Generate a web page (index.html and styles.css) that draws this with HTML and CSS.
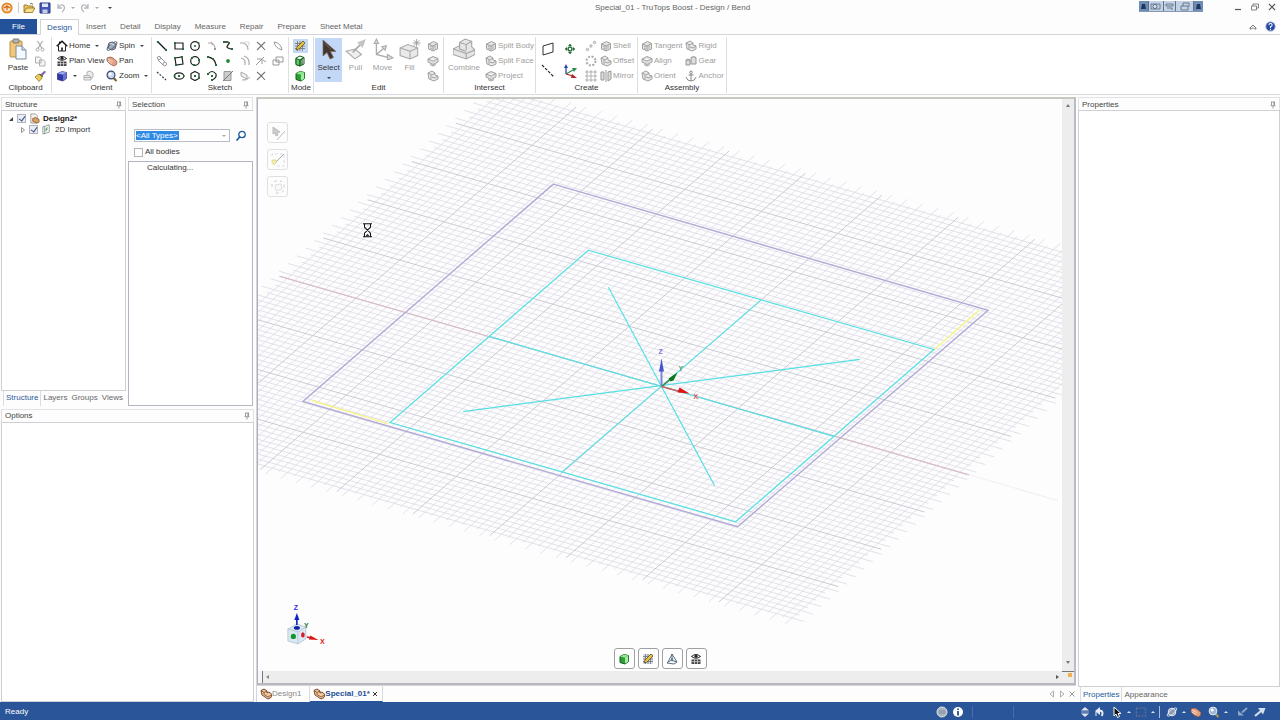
FILE: index.html
```html
<!DOCTYPE html>
<html lang="en">
<head>
<meta charset="utf-8">
<title>Special_01 - TruTops Boost - Design / Bend</title>
<link rel="stylesheet" href="styles.css">
</head>
<body>
<svg class="defs" aria-hidden="true">
  <symbol id="i-app" viewBox="0 0 12 12"><circle cx="6" cy="6" r="5.6" fill="#e8892c"/><circle cx="6" cy="6" r="3.6" fill="#fbe3c4"/><path d="M3 6l3-2 3 2M6 4v4" fill="none" stroke="#c8661a" stroke-width="1.2"/></symbol>
  <symbol id="i-open" viewBox="0 0 12 12"><path d="M1 10V3h3l1 1h5v2" fill="#f0c860" stroke="#8a6a20" stroke-width=".8"/><path d="M1 10.500 3.500 6H12l-2.500 4.500z" fill="#fbe08a" stroke="#8a6a20" stroke-width=".8"/><path d="M7 2q2-1.500 3 .5" fill="none" stroke="#444" stroke-width=".8"/></symbol>
  <symbol id="i-save" viewBox="0 0 12 12"><path d="M1 1h10v10H1z" fill="#4558b8" stroke="#2a3680"/><path d="M3 1.500h6V5H3z" fill="#dfe8fa"/><path d="M3.500 7.500h5V11h-5z" fill="#c6cfe8"/></symbol>
  <symbol id="i-undo" viewBox="0 0 12 12"><path d="M3 2v4h4M3 6q3-5 6-2 1.500 3-2 6" fill="none" stroke="#b4b8be" stroke-width="1.300"/></symbol>
  <symbol id="i-paste" viewBox="0 0 18 22"><rect x="1" y="3" width="12" height="16" rx="1" fill="#f0c878" stroke="#b8904a"/><rect x="4" y="1" width="6" height="4" rx="1" fill="#b5b5b0" stroke="#777"/><path d="M7 8h6l4 4v9H7z" fill="#f4f8ff" stroke="#7a8aa4"/><path d="M13 8v4h4" fill="#d4dced" stroke="#7a8aa4"/></symbol>
  <symbol id="i-cut" viewBox="0 0 12 12"><path d="M3.500 1 8 8.500M8.500 1 4 8.500" stroke="#aaa" stroke-width="1.200"/><circle cx="3.500" cy="9.500" r="1.500" fill="none" stroke="#aaa"/><circle cx="8.500" cy="9.500" r="1.500" fill="none" stroke="#aaa"/></symbol>
  <symbol id="i-copy" viewBox="0 0 12 12"><path d="M1.500 2h4l1.500 1.500V8H1.500zM5.500 5h4L11 6.500V11H5.500z" fill="#f5f5f5" stroke="#b0b0b0"/></symbol>
  <symbol id="i-brush" viewBox="0 0 12 12"><path d="M7 4.500 10.500 1l1 1L8 6z" fill="#8a5ab8" stroke="#55407a" stroke-width=".5"/><path d="M1 7q3-3 5-3l2.500 2.500Q8 9 5 11.500z" fill="#e8cf50" stroke="#80702a" stroke-width=".7"/><path d="m5.500 4 3 3" stroke="#333"/></symbol>
  <symbol id="i-home" viewBox="0 0 12 12"><path d="M2.500 5.500V11h7V5.500" fill="#fff" stroke="#222"/><path d="M.7 6.300 6 1.300l5.300 5" fill="none" stroke="#111" stroke-width="1.400"/><path d="M3 1.500h1.500V3L3 4z" fill="#111"/><path d="M5 11V7.500h2V11" fill="#444"/></symbol>
  <symbol id="i-plan" viewBox="0 0 12 12"><path d="M1.500 3.500Q6-.5 10.500 3.500 6 7 1.500 3.500z" fill="#eee" stroke="#222"/><circle cx="6" cy="3.300" r="1.500" fill="#222"/><path d="M1.500 6.500h9V11h-9z" fill="#444"/><path d="M4.500 6.500V11M7.500 6.500V11M1.500 8.700h9" stroke="#fff" stroke-width=".6"/></symbol>
  <symbol id="i-cube" viewBox="0 0 12 12"><path d="m1.500 3.500 4.500-2 4.500 1v6L7 11l-5.500-1.500z" fill="#3038a8" stroke="#141a60" stroke-width=".6"/><path d="m1.500 3.500 4.500-2 4.500 1L7 4.700z" fill="#98a4ec"/><path d="M7 4.700 10.500 2.500v6L7 11z" fill="#6a72d0"/></symbol>
  <symbol id="i-ghost" viewBox="0 0 12 12"><path d="M1 5.500h5l2 1.500v3H1zM4 5V2l3-1 3 2v4L8 8.500M1 7.500h7" fill="#ececec" stroke="#aaa" stroke-width=".9"/></symbol>
  <symbol id="i-spin" viewBox="0 0 12 12"><circle cx="6" cy="6" r="4" fill="#a3adbf" stroke="#5c6578"/><ellipse cx="6" cy="6" rx="6" ry="2.200" transform="rotate(-40 6 6)" fill="none" stroke="#5a6478" stroke-width="1"/><path d="M4 4Q6 3 7.500 4.500" stroke="#eef1f6" fill="none"/></symbol>
  <symbol id="i-pan" viewBox="0 0 12 12"><path d="M1 3q3-2 6 0l4 3.500-.5 3L8 11 4 9 1 6z" fill="#e0a084" stroke="#8e4e3a" stroke-width=".7"/><path d="m2 4 5 2.500M1.700 6 6 8.500" stroke="#fbd9c8" stroke-width=".9"/></symbol>
  <symbol id="i-zoom" viewBox="0 0 12 12"><path d="m7.500 8 3 3" stroke="#6c641f" stroke-width="2"/><circle cx="5" cy="5" r="3.900" fill="#c9d9ef" stroke="#3f4a74" stroke-width="1.200"/><circle cx="4.200" cy="4" r="1.500" fill="#fff"/></symbol>

  <symbol id="s-line" viewBox="0 0 12 12"><path d="m2 2 8 8" stroke="#111" stroke-width="1.300"/><path d="M.9.900h2v2h-2zM9 9h2v2H9z" fill="#276b3a"/></symbol>
  <symbol id="s-rect" viewBox="0 0 12 12"><path d="M2 3h8v6H2z" fill="none" stroke="#222" stroke-width="1.200"/><path d="M1 2h2v2H1zM9 8h2v2H9z" fill="#276b3a"/></symbol>
  <symbol id="s-circ" viewBox="0 0 12 12"><circle cx="6" cy="6" r="4.300" fill="none" stroke="#222" stroke-width="1.200"/><circle cx="6" cy="6" r="1.100" fill="#276b3a"/><circle cx="9.500" cy="3" r="1" fill="#276b3a"/></symbol>
  <symbol id="s-garc" viewBox="0 0 12 12"><path d="M2 3h3q4 1 4 6M5 2q2 2 1 3" fill="none" stroke="#aaa" stroke-width="1.100"/><path d="M8 8h2v2H8z" fill="#999"/></symbol>
  <symbol id="s-poly" viewBox="0 0 12 12"><path d="M2 2h4q2 1 0 3t0 3q2 1 4 1" fill="none" stroke="#222" stroke-width="1.300"/><path d="M1 1h2v2H1zM6 2h2v2H6zM9 8h2v2H9z" fill="#276b3a"/></symbol>
  <symbol id="s-fil" viewBox="0 0 12 12"><path d="M1 3h3q5 1 5 7" fill="none" stroke="#aaa" stroke-width="1.200"/><path d="M5 2h5v4" fill="none" stroke="#ccc" stroke-width=".8"/></symbol>
  <symbol id="s-trim" viewBox="0 0 12 12"><path d="M2 2q4 3 8 8M10 2 2 10" fill="none" stroke="#777" stroke-width="1.100"/></symbol>
  <symbol id="s-bend" viewBox="0 0 12 12"><path d="M2 2q1 6 8 8-1-7-8-8z" fill="none" stroke="#999"/></symbol>
  <symbol id="s-tan" viewBox="0 0 12 12"><circle cx="3" cy="3" r="1.600" fill="none" stroke="#999"/><path d="m4 2 6 6M2 5l5 5" stroke="#999"/><circle cx="8.800" cy="9" r="1.800" fill="none" stroke="#999"/></symbol>
  <symbol id="s-rect3" viewBox="0 0 12 12"><path d="m2 3 7-1 1 7-7 1z" fill="none" stroke="#222" stroke-width="1.200"/><path d="M1 2h2v2H1zM8 1h2v2H8zM2 9h2v2H2z" fill="#276b3a"/></symbol>
  <symbol id="s-circ3" viewBox="0 0 12 12"><circle cx="6" cy="6" r="4.300" fill="none" stroke="#222" stroke-width="1.200"/><path d="M2 2h2v2H2zM9 4h2v2H9zM4 9h2v2H4z" fill="#276b3a"/></symbol>
  <symbol id="s-arc" viewBox="0 0 12 12"><path d="M2 2q7 1 8 8" fill="none" stroke="#222" stroke-width="1.300"/><path d="M1 1h2v2H1zM6 3h2v2H6zM9 9h2v2H9z" fill="#276b3a"/></symbol>
  <symbol id="s-pt" viewBox="0 0 12 12"><circle cx="6" cy="6" r="1.900" fill="#238a32"/></symbol>
  <symbol id="s-off" viewBox="0 0 12 12"><path d="M2 3q5 1 4 7M5 1q6 2 5 9" fill="none" stroke="#aaa" stroke-width="1.200"/></symbol>
  <symbol id="s-split" viewBox="0 0 12 12"><path d="m1 10 8-8M2 4h5v5M8 5l3 2" fill="none" stroke="#999"/></symbol>
  <symbol id="s-scale" viewBox="0 0 12 12"><path d="M1 5h6v5H1zM4 2h7v5H4z" fill="none" stroke="#999"/></symbol>
  <symbol id="s-dash" viewBox="0 0 12 12"><path d="m1 2 9 8" stroke="#334" stroke-width="1.200" stroke-dasharray="2 1.500"/></symbol>
  <symbol id="s-ell" viewBox="0 0 12 12"><ellipse cx="6" cy="6" rx="4.800" ry="3.200" fill="none" stroke="#222" stroke-width="1.200"/><path d="M5 5h2v2H5zM1 5h1.500v2H1zM10 5h1.500v2H10z" fill="#276b3a"/></symbol>
  <symbol id="s-hex" viewBox="0 0 12 12"><path d="m6 1.500 4 2v5l-4 2-4-2v-5z" fill="none" stroke="#222" stroke-width="1.200"/><path d="M5 5h2v2H5zM9 7h2v2H9z" fill="#276b3a"/></symbol>
  <symbol id="s-sweep" viewBox="0 0 12 12"><path d="M2 4q4-5 8 0 1 4-4 6" fill="none" stroke="#222" stroke-width="1.200"/><path d="M1 3h2v2H1zM5 5h2v2H5zM5 9h2v2H5z" fill="#276b3a"/></symbol>
  <symbol id="s-face" viewBox="0 0 12 12"><path d="M2 1.500h7v9H2z" fill="#ccc" stroke="#999"/><path d="M1 11 11 1" stroke="#777"/></symbol>
  <symbol id="s-proj" viewBox="0 0 12 12"><path d="M2 2 8 5v4L2 6zM3 10q5 1 8-3" fill="#eee" stroke="#aaa"/></symbol>

  <symbol id="i-sketch" viewBox="0 0 12 12"><path d="M1 1h10v10H1z" fill="#d9dde6"/><path d="M1 3.500h10M1 6h10M1 8.500h10M3.500 1v10M6 1v10M8.500 1v10" stroke="#6b7184" stroke-width=".8"/><path d="m2 10 1-3 6-6 2 2-6 6z" fill="#e7c440" stroke="#54450e" stroke-width=".7"/></symbol>
  <symbol id="i-section" viewBox="0 0 12 12"><path d="m2 3 4-2 4 1.500V9l-4 2-4-1.500z" fill="#f2fff2" stroke="#185c1d"/><path d="M2 3.500 6 5v6L2 9.500z" fill="#5ccb60" stroke="#185c1d"/><path d="M6 5v6M6 5l4-2.500M8 4v6" stroke="#185c1d" stroke-width="1.200"/></symbol>
  <symbol id="i-solid" viewBox="0 0 12 12"><path d="m2 3.500 4-2 4.500 1v6L7 11 2 9.500z" fill="#2e9d38" stroke="#185c1d"/><path d="m2 3.500 4-2 4.500 1L7 4.700z" fill="#8fe890"/><path d="m7 4.700 3.200-2v6L7 10.500z" fill="#a5eda5"/></symbol>
  <symbol id="i-select" viewBox="0 0 20 22"><path d="M4 2v16l4-3.500 3 6.500 3.500-1.500-3-6h5.500z" fill="#44352e" stroke="#7d6c62" stroke-width=".7"/><path d="m5.500 5 7 7" stroke="#76665d"/></symbol>
  <symbol id="i-pull" viewBox="0 0 20 20"><path d="m1 12 8-2 6 5-6 4z" fill="#eee" stroke="#aaa"/><path d="m7 13 9-9" stroke="#aaa" stroke-width="1.600"/><path d="m11 4 8-3-3 8z" fill="#c4c4c4"/></symbol>
  <symbol id="i-move" viewBox="0 0 20 20"><path d="M4 3v12l12 3M4 15l7-6" fill="none" stroke="#aaa" stroke-width="1.200"/><path d="m2 5 2-4 2 4zM9 8l4-1-1 4zM14 15l5 3-5 2z" fill="#ddd" stroke="#aaa"/></symbol>
  <symbol id="i-fill" viewBox="0 0 20 20"><path d="m1 9 7-3 9 3v7l-7 3-9-3zM1 9l9 3v7M10 12l7-3" fill="#e9e9e9" stroke="#aaa"/><path d="M16 1v7M12.500 4.500h7M13.500 2l5 5M18.500 2l-5 5" stroke="#999" stroke-width=".8"/></symbol>
  <symbol id="i-box" viewBox="0 0 12 12"><path d="m1.500 4 5-2.500 4 2V9l-4.500 2-4.500-2zM1.500 4 6 6v5M6 6l4.500-2.500" fill="#e4e4e4" stroke="#a0a0a0"/><path d="M8 5v4M3 6l2 1M3 8l2 1" stroke="#aaa"/></symbol>
  <symbol id="i-layer" viewBox="0 0 12 12"><path d="m1 4 5-2.500 5 2L6 6zM1 4v3l5 2.500L11 7V3.500M3 9.500l3 1.500 3-1.500" fill="#e0e0e0" stroke="#a0a0a0"/></symbol>
  <symbol id="i-swirl" viewBox="0 0 12 12"><path d="m1 3 4-2 3 2v2l3 1v3l-4 2-5-2z" fill="#e9e9e9" stroke="#a0a0a0"/><path d="m1 3 4 2 3-2M4 5v4M5 7l3 1 3-2" fill="none" stroke="#a0a0a0"/></symbol>
  <symbol id="i-combine" viewBox="0 0 20 20"><path d="m6 4 5-3 6 2v5l3 3v4l-8 4-12-4v-5l6-3z" fill="#e6e6e6" stroke="#a4a4a4"/><path d="m6 4 6 2v5M12 6l5-3M0 10l12 4v5M12 14l8-3M6 7v3l6 2" fill="none" stroke="#a4a4a4"/></symbol>
  <symbol id="i-cylpair" viewBox="0 0 12 12"><path d="M1 5h4v5H1zM6 2.500h5V9H6z" fill="#ddd" stroke="#979797"/><path d="M1 5q2-2 4 0M6 2.500q2.500-2 5 0" fill="#f2f2f2" stroke="#979797"/></symbol>
  <symbol id="i-mirror" viewBox="0 0 12 12"><path d="M1 2h3v8H1zM8 2l3-1v8l-3 2zM6 0v12" fill="#ddd" stroke="#979797"/></symbol>
  <symbol id="i-anchor" viewBox="0 0 12 12"><circle cx="6" cy="2.300" r="1.300" fill="none" stroke="#888"/><path d="M6 4v7M3.500 5h5M1 7q1 4 5 4t5-4" fill="none" stroke="#888"/></symbol>
  <symbol id="i-plane" viewBox="0 0 14 14"><path d="m2 4 10-3v9L2 13z" fill="#fff" stroke="#333"/></symbol>
  <symbol id="i-axis" viewBox="0 0 14 14"><path d="m1 1 12 12" stroke="#222" stroke-width="1.100" stroke-dasharray="3 1.300"/></symbol>
  <symbol id="i-point" viewBox="0 0 14 14"><circle cx="7" cy="7" r="1.900" fill="none" stroke="#1f6a2c" stroke-width="1.200"/><path d="m7 2 1.500 2h-3zM7 12l1.500-2h-3zM2 7l2-1.500v3zM12 7l-2-1.500v3z" fill="#1f6a2c" stroke="#1f6a2c" stroke-width=".6"/></symbol>
  <symbol id="i-origin" viewBox="0 0 14 14"><path d="M3 10V2" stroke="#2848a8" stroke-width="1.300"/><path d="m1 4 2-4 2 4z" fill="#2848a8"/><path d="m3 10 7-4" stroke="#2a8a50" stroke-width="1.200"/><path d="m9 4 5 0-3 4z" fill="#2a8a50"/><path d="m3 10 7 2" stroke="#b32525" stroke-width="1.200"/><path d="m9 10 5 4H8z" fill="#b32525"/></symbol>
  <symbol id="i-pat1" viewBox="0 0 12 12"><g fill="#eee" stroke="#999" stroke-width=".8"><circle cx="2.500" cy="9.500" r="1.200"/><circle cx="6" cy="6" r="1.200"/><circle cx="9.500" cy="2.500" r="1.200"/></g></symbol>
  <symbol id="i-pat2" viewBox="0 0 12 12"><circle cx="6" cy="6" r="4.500" fill="none" stroke="#aaa" stroke-width="2" stroke-dasharray="2 1.530"/></symbol>
  <symbol id="i-pat3" viewBox="0 0 12 12"><path d="M1 1h2v2H1zM5 1h2v2H5zM9 1h2v2H9zM1 5h2v2H1zM5 5h2v2H5zM9 5h2v2H9zM1 9h2v2H1zM5 9h2v2H5zM9 9h2v2H9z" fill="#fff" stroke="#999" stroke-width=".7"/></symbol>

  <symbol id="i-pin" viewBox="0 0 8 8"><path d="M2 1h4M2.500 1v3.500M5.500 1v3.500M4.900 1v3.500M1.500 4.700h5M4 5v2.500" stroke="#888" stroke-width=".8"/></symbol>
  <symbol id="i-doc" viewBox="0 0 12 12"><path d="M2 1h5l2 2v8H2z" fill="#f6f2ea" stroke="#777" stroke-width=".7"/><path d="m4 6 3-1 4 2v3l-3 1-4-2z" fill="#d9a163" stroke="#70451c" stroke-width=".7"/></symbol>
  <symbol id="i-part" viewBox="0 0 12 12"><path d="M1 2.500 4 1l3 2v2l2-1 3 2.500-1 3-3 1.500-6-4z" fill="#f0c89c" stroke="#6b3a1b" stroke-width=".9"/><path d="m1 2.500 3 2v2l4 2.500 3.500-2M4 4.500l3-1.500" fill="none" stroke="#6b3a1b" stroke-width=".7"/></symbol>
  <symbol id="i-sheet" viewBox="0 0 12 12"><path d="m2 3 7-2v8l-7 2zM4 2.500v8" fill="#f4faf6" stroke="#7a8880" stroke-width=".8"/><path d="M5.500 8V5l2-1M5.500 6h1.500" fill="none" stroke="#3c7f56" stroke-width=".8"/></symbol>
  <symbol id="i-search" viewBox="0 0 12 12"><circle cx="7" cy="4.500" r="3.200" fill="none" stroke="#1d5a9a" stroke-width="1.300"/><path d="M4.700 7 1.500 10.500" stroke="#1d5a9a" stroke-width="1.800"/></symbol>
  <symbol id="i-triad" viewBox="0 0 12 12"><path d="m1 10 4-3 6 2-3 2zM6 8V1l5 8M6 1 2 9" fill="#edf4f8" stroke="#3d5260" stroke-width=".8"/><circle cx="6" cy="6" r="1" fill="#2c78b8"/></symbol>
  <symbol id="w-sel" viewBox="0 0 16 16"><path d="M3 2v7l2-1 1 3 2-1-1-2.500 3-.5z" fill="#ccc" stroke="#bbb"/><path d="M7 15l8-9" stroke="#bbb"/></symbol>
  <symbol id="w-line" viewBox="0 0 16 16"><path d="M2 4V2h12v12H5" fill="none" stroke="#ddd" stroke-dasharray="3 2"/><path d="m5 11 9-9" stroke="#aaa"/><path d="M2 8h4v3L4 13 2 11z" fill="#f5efb2" stroke="#ddd188" stroke-width=".7"/></symbol>
  <symbol id="w-rot" viewBox="0 0 16 16"><path d="m5 6 6-1 1 5-6 2z" fill="#fafafa" stroke="#ddd"/><path d="M2 8V5l3-3h6l3 3v6l-3 3H5" fill="none" stroke="#ccc" stroke-dasharray="3 3"/></symbol>
  <symbol id="t-orbit" viewBox="0 0 12 12"><circle cx="6" cy="6" r="3.800" fill="#8c9bb2" stroke="#e9eef5"/><ellipse cx="6" cy="6" rx="6" ry="2" transform="rotate(-40 6 6)" fill="none" stroke="#e4eaf2" stroke-width=".8"/></symbol>
  <symbol id="t-undo" viewBox="0 0 12 12"><path d="M2 10V6l2-1v5z" fill="#8fa6c8"/><path d="M6 5q5-1 3 5" fill="none" stroke="#e6edf6" stroke-width="2"/><path d="m2 5 5-4v8z" fill="#e6edf6"/></symbol>
  <symbol id="t-cursor" viewBox="0 0 12 12"><path d="M3 1v9l2-2 1.500 3.500 2-1L7 7.500h3z" fill="#111" stroke="#fff"/></symbol>
  <symbol id="t-marq" viewBox="0 0 12 12"><path d="M1.500 2h9v8h-9z" fill="none" stroke="#64748f" stroke-width="1.200" stroke-dasharray="2 1.200"/></symbol>
  <symbol id="t-updown" viewBox="0 0 12 12"><path d="M2 4.500 6 1l4 3.500zM2 7.500 6 11l4-3.500z" fill="#dce4ef"/><path d="M2 6h8" stroke="#a9b9d2" stroke-width=".8"/></symbol>
  <symbol id="t-zoom" viewBox="0 0 12 12"><path d="m7.500 8 3 3" stroke="#a79a52" stroke-width="2"/><circle cx="5" cy="5" r="3.900" fill="#9fb4d6" stroke="#dfe7f2"/><circle cx="4.200" cy="4" r="1.500" fill="#fff"/></symbol>
  <symbol id="t-out" viewBox="0 0 12 12"><path d="m1 10 6-5" stroke="#d4dfec" stroke-width="2.200"/><path d="M4 2h7.500L9 8.500z" fill="#d4dfec"/></symbol>
  <symbol id="t-in" viewBox="0 0 12 12"><path d="m11 2-5 4.500" stroke="#8ea5c7" stroke-width="1.800"/><path d="M2 4.500v5h6z" fill="#8ea5c7"/></symbol>
  <symbol id="t-ball" viewBox="0 0 12 12"><circle cx="6" cy="6" r="5" fill="#aab4bf" stroke="#dce3ea"/><path d="M3 5h6M3 7h6" stroke="#758397" stroke-width=".8"/></symbol>
  <symbol id="t-info" viewBox="0 0 12 12"><circle cx="6" cy="6" r="5" fill="#fff"/><path d="M6 5v4.500M6 2.500v1.500" stroke="#27508e" stroke-width="1.800"/></symbol>
</svg>

<header class="titlebar">
  <div class="quick">
    <svg class="ic"><use href="#i-app"/></svg><i class="bar"></i>
    <button aria-label="Open"><svg class="ic"><use href="#i-open"/></svg></button>
    <button aria-label="Save"><svg class="ic"><use href="#i-save"/></svg></button>
    <button aria-label="Undo"><svg class="ic"><use href="#i-undo"/></svg><i class="caret dim"></i></button>
    <button aria-label="Redo"><svg class="ic flip"><use href="#i-undo"/></svg><i class="caret dim"></i></button>
    <button class="more" aria-label="Customize"><i class="caret"></i></button>
  </div>
  <h1>Special_01 - TruTops Boost - Design / Bend</h1>
  <div class="window">
    <svg class="widget" viewBox="0 0 64 11"><rect width="64" height="11" rx="1" fill="#c5d2e5"/><path d="M0 0h9v11H0zM55 0h9v11h-9z" fill="#6f8cb5"/><path d="M9.500 0v11M24.500 0v11M36.500 0v11M54.500 0v11" stroke="#5f7391"/><path d="M2 8h5L6 3H3zM57 8h5l-1-5h-3z" fill="#20375e"/><path d="M12 3h9v5h-9zM27 3h7v2h-7zM28 7h5v2M42 5h7v4h-7zM44 5V2h6v4" fill="none" stroke="#52647e" stroke-width=".8"/><circle cx="16" cy="5.500" r="2" fill="#e5ecf5" stroke="#52647e"/><path d="M0 10.500h64" stroke="#8598b5"/></svg>
    <button aria-label="Minimize"><svg class="sm" viewBox="0 0 8 8"><path d="M1 6.500h6" stroke="#555" stroke-width="1.200"/></svg></button>
    <button aria-label="Restore"><svg class="sm" viewBox="0 0 8 8"><path d="M.5 3h5v4h-5zM2 3V1h5.500v4H6" fill="none" stroke="#666" stroke-width=".8"/></svg></button>
    <button aria-label="Close"><svg class="sm" viewBox="0 0 8 8"><path d="m1 1 6 6M7 1 1 7" stroke="#555" stroke-width="1.100"/></svg></button>
  </div>
</header>

<nav class="tabs">
  <button class="file">File</button>
  <button class="on">Design</button>
  <button>Insert</button><button>Detail</button><button>Display</button><button>Measure</button><button>Repair</button><button>Prepare</button><button>Sheet Metal</button>
  <span class="help">
    <button aria-label="Collapse ribbon"><svg class="sm" viewBox="0 0 8 8"><path d="M1 5 4 2l3 3v1H5.500L4 4.500 2.500 6H1z" fill="none" stroke="#555" stroke-width=".8"/></svg></button>
    <button aria-label="Help"><svg class="hp" viewBox="0 0 12 12"><circle cx="6" cy="6" r="5" fill="#2446a4" stroke="#8796c4"/><path d="M4.300 4.500q0-1.700 1.800-1.700 1.700 0 1.700 1.500 0 1-1.800 2V7.500M6 8.500V10" fill="none" stroke="#fff" stroke-width="1.200"/></svg></button>
  </span>
</nav>

<div class="ribbon">
  <section class="group g-clip">
    <div class="body">
      <button class="big"><svg class="ic24"><use href="#i-paste"/></svg>Paste</button>
      <div class="col"><button aria-label="Cut"><svg class="ic"><use href="#i-cut"/></svg></button><button aria-label="Copy"><svg class="ic"><use href="#i-copy"/></svg></button><button aria-label="Format painter"><svg class="ic"><use href="#i-brush"/></svg></button></div>
    </div><h2>Clipboard</h2>
  </section>
  <section class="group g-orient">
    <div class="body">
      <div class="col">
        <button><svg class="ic"><use href="#i-home"/></svg>Home<i class="caret"></i></button>
        <button><svg class="ic"><use href="#i-plan"/></svg>Plan View</button>
        <span class="row"><button aria-label="View cube"><svg class="ic"><use href="#i-cube"/></svg><i class="caret"></i></button><button aria-label="Previous view"><svg class="ic"><use href="#i-ghost"/></svg></button></span>
      </div>
      <div class="col">
        <button><svg class="ic"><use href="#i-spin"/></svg>Spin<i class="caret"></i></button>
        <button><svg class="ic"><use href="#i-pan"/></svg>Pan</button>
        <button><svg class="ic"><use href="#i-zoom"/></svg>Zoom<i class="caret"></i></button>
      </div>
    </div><h2>Orient</h2>
  </section>
  <section class="group g-sketch">
    <div class="body tools">
      <button aria-label="Line"><svg class="ic"><use href="#s-line"/></svg></button><button aria-label="Rectangle"><svg class="ic"><use href="#s-rect"/></svg></button><button aria-label="Circle"><svg class="ic"><use href="#s-circ"/></svg></button><button aria-label="Tangent arc"><svg class="ic"><use href="#s-garc"/></svg></button><button aria-label="Spline"><svg class="ic"><use href="#s-poly"/></svg></button><button aria-label="Fillet"><svg class="ic"><use href="#s-fil"/></svg></button><button aria-label="Trim"><svg class="ic"><use href="#s-trim"/></svg></button><button aria-label="Bend"><svg class="ic"><use href="#s-bend"/></svg></button>
      <button aria-label="Tangent line"><svg class="ic"><use href="#s-tan"/></svg></button><button aria-label="Three-point rectangle"><svg class="ic"><use href="#s-rect3"/></svg></button><button aria-label="Three-point circle"><svg class="ic"><use href="#s-circ3"/></svg></button><button aria-label="Arc"><svg class="ic"><use href="#s-arc"/></svg></button><button aria-label="Point"><svg class="ic"><use href="#s-pt"/></svg></button><button aria-label="Offset curve"><svg class="ic"><use href="#s-off"/></svg></button><button aria-label="Split curve"><svg class="ic"><use href="#s-split"/></svg></button><button aria-label="Scale"><svg class="ic"><use href="#s-scale"/></svg></button>
      <button aria-label="Construction line"><svg class="ic"><use href="#s-dash"/></svg></button><button aria-label="Ellipse"><svg class="ic"><use href="#s-ell"/></svg></button><button aria-label="Polygon"><svg class="ic"><use href="#s-hex"/></svg></button><button aria-label="Sweep arc"><svg class="ic"><use href="#s-sweep"/></svg></button><button aria-label="Face curve"><svg class="ic"><use href="#s-face"/></svg></button><button aria-label="Project to sketch"><svg class="ic"><use href="#s-proj"/></svg></button><button aria-label="Corner"><svg class="ic"><use href="#s-trim"/></svg></button>
    </div><h2>Sketch</h2>
  </section>
  <section class="group g-mode">
    <div class="body"><div class="col"><button class="sel" aria-label="Sketch mode"><svg class="ic"><use href="#i-sketch"/></svg></button><button aria-label="Section mode"><svg class="ic"><use href="#i-section"/></svg></button><button aria-label="3D mode"><svg class="ic"><use href="#i-solid"/></svg></button></div></div><h2>Mode</h2>
  </section>
  <section class="group g-edit">
    <div class="body">
      <button class="big sel"><svg class="ic24"><use href="#i-select"/></svg>Select<i class="caret"></i></button>
      <button class="big" disabled><svg class="ic24"><use href="#i-pull"/></svg>Pull</button>
      <button class="big" disabled><svg class="ic24"><use href="#i-move"/></svg>Move</button>
      <button class="big" disabled><svg class="ic24"><use href="#i-fill"/></svg>Fill</button>
      <div class="col"><button disabled aria-label="Blend"><svg class="ic"><use href="#i-box"/></svg></button><button disabled aria-label="Replace"><svg class="ic"><use href="#i-layer"/></svg></button><button disabled aria-label="Tweak"><svg class="ic"><use href="#i-swirl"/></svg></button></div>
    </div><h2>Edit</h2>
  </section>
  <section class="group g-inter">
    <div class="body">
      <button class="big" disabled><svg class="ic24"><use href="#i-combine"/></svg>Combine</button>
      <div class="col"><button disabled><svg class="ic"><use href="#i-box"/></svg>Split Body</button><button disabled><svg class="ic"><use href="#i-swirl"/></svg>Split Face</button><button disabled><svg class="ic"><use href="#i-layer"/></svg>Project</button></div>
    </div><h2>Intersect</h2>
  </section>
  <section class="group g-create">
    <div class="body">
      <div class="col wide"><button aria-label="Plane"><svg class="ic14"><use href="#i-plane"/></svg></button><button aria-label="Axis"><svg class="ic14"><use href="#i-axis"/></svg></button></div>
      <div class="col wide"><button aria-label="Point"><svg class="ic14"><use href="#i-point"/></svg></button><button aria-label="Origin"><svg class="ic14"><use href="#i-origin"/></svg></button></div>
      <div class="col"><button disabled aria-label="Linear pattern"><svg class="ic"><use href="#i-pat1"/></svg></button><button disabled aria-label="Circular pattern"><svg class="ic"><use href="#i-pat2"/></svg></button><button disabled aria-label="Fill pattern"><svg class="ic"><use href="#i-pat3"/></svg></button></div>
      <div class="col"><button disabled><svg class="ic"><use href="#i-box"/></svg>Shell</button><button disabled><svg class="ic"><use href="#i-swirl"/></svg>Offset</button><button disabled><svg class="ic"><use href="#i-mirror"/></svg>Mirror</button></div>
    </div><h2>Create</h2>
  </section>
  <section class="group g-asm">
    <div class="body">
      <div class="col"><button disabled><svg class="ic"><use href="#i-box"/></svg>Tangent</button><button disabled><svg class="ic"><use href="#i-layer"/></svg>Align</button><button disabled><svg class="ic"><use href="#i-swirl"/></svg>Orient</button></div>
      <div class="col"><button disabled><svg class="ic"><use href="#i-swirl"/></svg>Rigid</button><button disabled><svg class="ic"><use href="#i-cylpair"/></svg>Gear</button><button disabled><svg class="ic"><use href="#i-anchor"/></svg>Anchor</button></div>
    </div><h2>Assembly</h2>
  </section>
</div>

<main class="work">
  <aside class="left">
    <div class="upper">
      <section class="panel">
        <h3>Structure<svg class="pin"><use href="#i-pin"/></svg></h3>
        <div class="sheet tree">
          <label><svg class="tw" viewBox="0 0 6 6"><path d="M5 1v4H1z" fill="#444"/></svg><input type="checkbox" checked><svg class="ic"><use href="#i-doc"/></svg><b>Design2*</b></label>
          <label class="child"><svg class="tw" viewBox="0 0 6 6"><path d="M1.500.5 4.500 3l-3 2.500z" fill="#fff" stroke="#777" stroke-width=".8"/></svg><input type="checkbox" checked><svg class="ic"><use href="#i-sheet"/></svg>2D Import</label>
        </div>
        <div class="subtabs"><button class="on">Structure</button><button>Layers</button><button>Groups</button><button>Views</button></div>
      </section>
      <section class="panel">
        <h3>Selection<svg class="pin"><use href="#i-pin"/></svg></h3>
        <div class="filter">
          <div class="search"><span class="combo"><input type="text" value="&lt;All Types&gt;" aria-label="Type filter"><i class="caret dim"></i></span><button aria-label="Search"><svg class="ic"><use href="#i-search"/></svg></button></div>
          <label><input type="checkbox">All bodies</label>
        </div>
        <div class="results">Calculating...</div>
      </section>
    </div>
    <section class="panel options"><h3>Options<svg class="pin"><use href="#i-pin"/></svg></h3><div class="sheet"></div></section>
  </aside>

  <section class="center">
    <div class="frame">
      <div class="view">
        <svg class="scene" viewBox="257 99 805 571" preserveAspectRatio="xMidYMid slice">
          <path id="minor" fill="none" stroke="#dcdae6" stroke-width=".8"/>
          <path id="major" fill="none" stroke="#c6c4d0" stroke-width=".9"/>
          <path d="m968 474 89 26" stroke="#f0f0f4"/>
          <path d="m280 276 688 198" stroke="#dcb9c8"/>
          <path d="m553 184 434 126-250 216-434-125z" fill="none" stroke="#b2aad6" stroke-width="1.400"/>
          <path d="m312 400 76 23M978 310l-46 40" stroke="#f5f58a" stroke-width="1.400"/>
          <path d="m588 250 345 99-198 172-345-99zM489 336l345 100M760 300 561 472M608 287l106 198M859 359 463 411" fill="none" stroke="#55e0e4" stroke-width="1.200"/>
          <path d="M661 386v-18" stroke="#7887d8" stroke-width="2"/><path d="m658.500 371 2.500-13 2.500 13z" fill="#4256c8"/>
          <path d="m661 386 10-8" stroke="#3d8a55" stroke-width="1.600"/><path d="m668 378 9-6-4 8-3 1z" fill="#0a7a1e"/>
          <path d="m661 386 18 5" stroke="#c06464" stroke-width="1.600"/><path d="m677 392 2-5 10 6z" fill="#dc1414"/>
          <g class="axis"><text x="658" y="354" fill="#7a78e0">Z</text><text x="678" y="371" fill="#5a9c70">Y</text><text x="693" y="398" fill="#e05050">X</text></g>
          <g stroke-width=".6"><path d="m288 628 9-5 9 3v12l-8 5-10-3z" fill="#dbe8f2" stroke="#9fb4c6"/><path d="m288 628 10 3v12M298 631l8-5" fill="none" stroke="#9fb4c6"/></g>
          <ellipse cx="297" cy="627" rx="3" ry="1.800" fill="#1020b0"/><circle cx="293.500" cy="635.500" r="2.600" fill="#10982a"/><ellipse cx="303" cy="634" rx="1.800" ry="2.600" fill="#d02030"/>
          <path d="M297 624v-7" stroke="#1020c8" stroke-width="1.600"/><path d="m294.500 619 2.500-7 2.500 7z" fill="#1020c8"/>
          <path d="m307 636 5 1" stroke="#d01818" stroke-width="1.400"/><path d="m309 638.500 1.500-4 8 4.500z" fill="#e01414"/>
          <g class="axis"><text x="294" y="609" fill="#3030d8">Z</text><text x="304" y="627" fill="#2a7a3c">Y</text><text x="320" y="643" fill="#e01818">X</text></g>
          <path d="M363 223.500h9M363 236.500h9M364.500 224v3l6 6v3M370.500 224v3l-6 6v3" fill="none" stroke="#111"/><path d="M365.500 236h4l-2-2.500z" fill="#333"/>
        </svg>
        <div class="guides"><button aria-label="Select curve"><svg class="ic16"><use href="#w-sel"/></svg></button><button aria-label="Draw line"><svg class="ic16"><use href="#w-line"/></svg></button><button aria-label="Move grid"><svg class="ic16"><use href="#w-rot"/></svg></button></div>
        <div class="modes"><button aria-label="Solid"><svg class="ic"><use href="#i-solid"/></svg></button><button aria-label="Sketch"><svg class="ic"><use href="#i-sketch"/></svg></button><button aria-label="Plane triad"><svg class="ic"><use href="#i-triad"/></svg></button><button aria-label="Plan view"><svg class="ic"><use href="#i-plan"/></svg></button></div>
      </div>
      <div class="vbar"><i class="up"></i><i class="down"></i></div>
      <div class="hbar"><i class="lt"></i><i class="rt"></i></div>
      <div class="corner"><i></i></div>
    </div>
    <div class="docs">
      <button><svg class="ic"><use href="#i-part"/></svg>Design1</button>
      <button class="on"><svg class="ic"><use href="#i-part"/></svg>Special_01*<svg class="x" viewBox="0 0 6 6"><path d="m1 1 4 4M5 1 1 5" stroke="#333"/></svg></button>
      <span class="nav"><svg class="sm" viewBox="0 0 8 8"><path d="M5.500 1v6L2 4z" fill="none" stroke="#999" stroke-width=".8"/></svg><svg class="sm" viewBox="0 0 8 8"><path d="M2.500 1v6L6 4z" fill="none" stroke="#999" stroke-width=".8"/></svg><svg class="sm" viewBox="0 0 8 8"><path d="m1.500 1.500 5 5M6.500 1.500l-5 5" stroke="#999"/></svg></span>
    </div>
  </section>

  <aside class="right panel">
    <h3>Properties<svg class="pin"><use href="#i-pin"/></svg></h3>
    <div class="sheet"></div>
    <div class="subtabs"><button class="on">Properties</button><button>Appearance</button></div>
  </aside>
</main>

<footer class="status">
  <span class="msg">Ready</span>
  <span class="mid"><svg class="ic"><use href="#t-ball"/></svg><svg class="ic"><use href="#t-info"/></svg><i class="sep"></i><i class="sep far"></i></span>
  <span class="end"><svg class="ic"><use href="#t-updown"/></svg><svg class="ic"><use href="#t-undo"/></svg><svg class="ic ml"><use href="#t-cursor"/></svg><i class="upc"></i><svg class="ic"><use href="#t-marq"/></svg><i class="upc"></i><i class="sep lit"></i><svg class="ic ml"><use href="#t-orbit"/></svg><i class="upc"></i><svg class="ic"><use href="#i-pan"/></svg><svg class="ic ml"><use href="#t-zoom"/></svg><i class="upc"></i><svg class="ic ml"><use href="#t-in"/></svg><svg class="ic ml"><use href="#t-out"/></svg></span>
</footer>
<script src="grid.js"></script>
</body>
</html>
```
FILE: styles.css
```css
* { box-sizing: border-box; }
body { margin: 0; height: 100vh; display: flex; flex-direction: column; overflow: hidden; background: #fdfdfd; color: #333; font: 8px/10px "Liberation Sans", Arial, sans-serif; }
button { font: inherit; color: inherit; background: none; border: 0; padding: 0; margin: 0; display: flex; align-items: center; white-space: nowrap; }
h1, h2, h3 { margin: 0; font: inherit; }
svg { display: block; flex: none; }
.defs { position: absolute; width: 0; height: 0; }
.ic { width: 12px; height: 12px; }
.ic14 { width: 14px; height: 14px; }
.ic16 { width: 16px; height: 16px; }
.ic24 { width: 22px; height: 22px; }
.sm { width: 8px; height: 8px; }
.hp { width: 11px; height: 11px; }
.flip { transform: scaleX(-1); }
.caret { border: 2px solid transparent; border-top-color: #444; border-bottom: 0; height: 2px; }
.dim { border-top-color: #aaa; }

.titlebar { flex: none; height: 19px; display: grid; grid-template-columns: 1fr auto 1fr; align-items: start; padding: 1px 4px 0 1px; }
.titlebar h1 { padding: 2px 0 0 68px; color: #666; }
.quick { display: flex; align-items: center; gap: 4px; height: 13px; }
.quick button { gap: 4px; }
.quick .bar { width: 1px; height: 11px; background: #ccc; margin-left: 1px; }
.quick .more { padding-left: 5px; }
.window { justify-self: end; display: flex; align-items: center; height: 11px; gap: 9px; }
.widget { width: 64px; height: 11px; margin-right: 22px; }

.tabs { flex: none; height: 16px; display: flex; border-bottom: 1px solid #d2d4d8; color: #666; }
.tabs > button { padding: 0 7px; }
.tabs .file { background: #24529a; color: #fff; width: 37px; justify-content: center; margin-right: 3px; padding: 0; }
.tabs .on { color: #2a5a9c; background: #fff; border: 1px solid #d2d4d8; border-bottom: 0; margin-bottom: -1px; width: 39px; justify-content: center; padding: 0; }
.help { margin-left: auto; display: flex; gap: 8px; padding-right: 4px; }

.ribbon { flex: none; height: 60px; display: flex; background: #fff; border-bottom: 1px solid #d8dade; }
.group { display: flex; flex-direction: column; border-right: 1px solid #dcdee2; margin: 2px 0 1px; }
.group h2 { text-align: center; line-height: 10px; }
.body { flex: 1; display: flex; padding-top: 1px; }
.col { display: grid; grid-template-rows: repeat(3, 15px); align-content: start; align-items: center; }
.col.wide { grid-template-rows: repeat(2, 22px); }
.col button { gap: 1px; height: 14px; }
.col button .caret { margin-left: 4px; }
.row { display: flex; gap: 6px; }
.big { flex-direction: column; justify-content: flex-start; gap: 3px; height: 44px; }
.big .caret { margin-top: 1px; }
button:disabled { color: #a0a0a0; }
.sel { background: #c3d7f6; }
.g-clip { width: 52px; }
.g-clip .body { padding-left: 7px; gap: 5px; }
.g-orient { width: 100px; }
.g-orient .body { padding-left: 4px; gap: 4px; }
.g-orient .col:first-child { width: 46px; }
.g-sketch { width: 137px; }
.g-sketch .tools { display: grid; grid-template: repeat(3, 15px) / repeat(8, 1fr); align-items: center; padding: 1px 2px 0; }
.tools button { justify-content: center; }
.g-mode { width: 25px; }
.g-mode .body { padding-left: 4px; }
.g-mode .sel { width: 15px; }
.g-mode .col button { padding-left: 1px; }
.g-edit { width: 130px; }
.g-edit .body { padding-left: 1px; }
.g-edit .big { width: 27px; }
.g-edit .col { padding-left: 4px; }
.g-inter { width: 92px; }
.g-inter .body { padding-left: 4px; gap: 5px; }
.g-create { width: 102px; }
.g-create .body { padding-left: 5px; gap: 8px; }
.g-create .col:nth-child(4) { margin-left: -5px; }
.g-asm { width: 89px; }
.g-asm .body { padding-left: 3px; gap: 3px; }

.work { flex: 1; min-height: 0; display: grid; grid-template-columns: 254px 1fr 202px; gap: 2px; padding-top: 2px; }
.panel { display: flex; flex-direction: column; min-width: 0; }
.panel h3 { flex: none; display: flex; align-items: center; justify-content: space-between; height: 13px; padding: 1px 2px 0 3px; border: 1px solid #e2e2e6; border-bottom: 0; color: #444; }
.pin { width: 8px; height: 8px; }
.sheet { flex: 1; border: 1px solid #cfcfd4; background: #fff; }
.left { display: flex; flex-direction: column; gap: 3px; min-height: 0; padding-left: 1px; }
.upper { flex: none; height: 51%; display: grid; grid-template-columns: 1fr 1fr; gap: 2px; padding-right: 1px; }
.options { flex: 1; }
.tree { padding: 2px 0 0 6px; }
.tree label { display: flex; align-items: center; height: 11px; gap: 3px; }
.tree b { color: #111; }
.tree .child { padding-left: 12px; }
.tree .ic { width: 11px; height: 11px; }
.tw { width: 6px; height: 6px; }
input[type=checkbox] { appearance: none; width: 9px; height: 9px; margin: 0; border: 1px solid #b4b4b8; background: #fff; flex: none; }
input[type=checkbox]:checked { background: #e9edf8; position: relative; }
input[type=checkbox]:checked::after { content: ""; position: absolute; left: 2px; top: 0; width: 3px; height: 5px; border: solid #3a4c86; border-width: 0 1px 1px 0; transform: rotate(35deg); }
.subtabs { flex: none; display: flex; height: 15px; padding-left: 2px; color: #666; }
.subtabs button { padding: 0 2px; }
.subtabs .on { color: #2a5a9c; border: solid #dcdce0; border-width: 0 1px; padding: 0 2px; }
.filter { flex: none; height: 51px; border-top: 1px solid #cfcfd4; padding: 18px 6px 0; display: flex; flex-direction: column; gap: 5px; }
.search { display: flex; align-items: center; gap: 5px; height: 13px; }
.combo { flex: 1; min-width: 0; height: 13px; display: flex; align-items: center; border: 1px solid #b9bcc6; background: #fff; padding-right: 3px; }
.combo input { width: 43px; height: 9px; font: inherit; line-height: 9px; border: 0; padding: 0; margin: 0 auto 0 1px; background: #2f8ae6; color: #fff; }
.filter label { display: flex; align-items: center; gap: 2px; }
.results { flex: 1; border: 1px solid #b4b4c4; background: #fff; padding: 1px 18px; }

.center { display: flex; flex-direction: column; min-width: 0; border-left: 1px solid #d4d4dc; }
.frame { flex: 1; min-height: 0; display: grid; grid-template: 1fr 12px / 1fr 12px; border: 1px solid #b0b0ba; border-top: 2px solid #c8c8c0; border-right: 2px solid #bcbac4; border-bottom: 2px solid #b8b8bc; background: #ededed; }
.view { position: relative; overflow: hidden; min-height: 0; background: #fdfdfd; }
.scene { position: absolute; inset: 0; width: 100%; height: 100%; }
.axis { font: bold 7px "Liberation Sans", Arial, sans-serif; }
.guides { position: absolute; left: 9px; top: 23px; display: grid; gap: 6px; }
.guides button, .modes button { width: 21px; height: 21px; justify-content: center; border: 1px solid #e0e0e0; border-radius: 3px; background: #fdfdfd; }
.modes { position: absolute; inset: auto 0 2px; display: flex; justify-content: center; gap: 3px; }
.modes button { border-color: #a0a0a4; background: #fff; }
.vbar { display: flex; flex-direction: column; justify-content: space-between; align-items: center; padding: 5px 0 7px; }
.up, .down { border: 2px solid transparent; }
.up { border-bottom: 3px solid #777; border-top: 0; }
.down { border-top: 3px solid #777; border-bottom: 0; }
.hbar { display: flex; justify-content: space-between; align-items: center; padding: 0 3px 0 4px; border-left: 4px solid #f6f6f6; box-shadow: inset 1px 0 #777; }
.lt, .rt { border: 2px solid transparent; }
.lt { border-right: 3px solid #888; border-left: 0; }
.rt { border-left: 3px solid #555; border-right: 0; }
.corner { border-top: 1px solid #777; padding: 1px 0 0 6px; }
.corner i { display: block; width: 4px; height: 4px; background: #f4b04a; }
.docs { flex: none; display: flex; height: 17px; color: #888; border-top: 1px solid #d4d4dc; }
.docs button { padding: 0 4px 0 3px; border-right: 1px solid #dcdce0; }
.docs button:first-child { padding-right: 8px; }
.docs .on { font-weight: bold; color: #1d4f95; border-bottom: 1px solid #24529a; }
.x { width: 6px; height: 6px; margin-left: 2px; }
.nav { margin-left: auto; display: flex; align-items: center; gap: 2px; }

.status { flex: none; height: 18px; display: flex; align-items: center; background: #2a5699; color: #fff; padding: 2px 14px 0 5px; }
.mid { margin-left: auto; display: flex; align-items: center; gap: 4px; margin-right: 65px; }
.sep { width: 1px; height: 12px; background: #456fae; margin-left: 4px; }
.far { margin-left: 36px; }
.end { display: flex; align-items: center; gap: 2px; }
.end .ml { margin-left: 4px; }
.lit { background: #a9bcd9; margin: 0; }
.upc { border: 2px solid transparent; border-bottom-color: #dce4ef; border-top: 0; height: 2px; margin: 0 2px; }
```
FILE: grid.js
```js
// Perspective sketch grid: u runs along X, v along Y, ten minor cells per major.
(function () {
  function at(u, v) {
    var w = v < 0 ? v * 0.975 : v;
    return (661 + 7.63 * u + 4.4 * w).toFixed(1) + " " + (386 + 2.2 * u - 3.82 * w).toFixed(1);
  }
  var minor = "", major = "";
  for (var i = -49; i < 50; i++) {
    var big = i % 10 === 0;
    var over = big ? 0 : (i % 2 ? 0.6 : -0.6);
    var d = "";
    if (i < 40) d += "M" + at(i, -40 - over) + "L" + at(i, 50 + over);
    if (i > -40) d += "M" + at(-50 - over, i) + "L" + at(40 + over, i);
    if (big) major += d; else minor += d;
  }
  document.getElementById("minor").setAttribute("d", minor);
  document.getElementById("major").setAttribute("d", major);
})();
```
